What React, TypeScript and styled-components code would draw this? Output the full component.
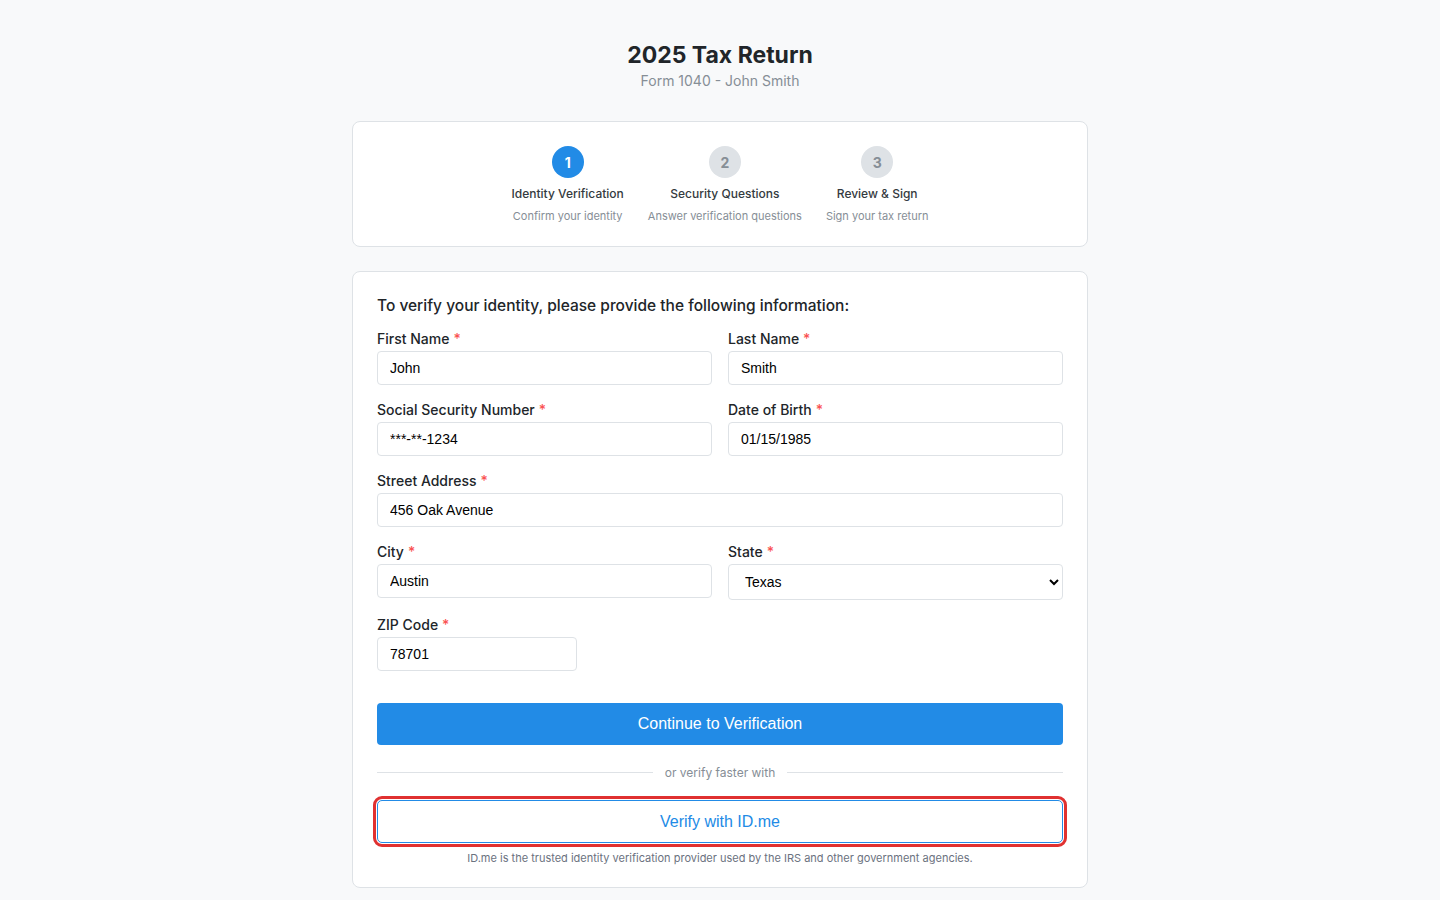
import React, { useState } from 'react';
import styled, { createGlobalStyle } from 'styled-components';

const GlobalStyle = createGlobalStyle`
  * { box-sizing: border-box; }
  body {
    margin: 0;
    background: #f8f9fa;
    font-family: Inter, "Noto Sans", sans-serif;
    color: #212529;
  }
`;

const SPage = styled.div`
  max-width: 736px;
  margin: 0 auto;
  padding: 40px 0 24px;
`;

const SHeader = styled.header`
  text-align: center;
  margin-bottom: 30px;
`;

const STitle = styled.h1`
  margin: 0;
  font-size: 23px;
  line-height: 30px;
  font-weight: 700;
  color: #212529;
`;

const SSubtitle = styled.p`
  margin: 1px 0 0;
  font-size: 14px;
  line-height: 20px;
  color: #868e96;
`;

const SCard = styled.section`
  background: #fff;
  border: 1px solid #dee2e6;
  border-radius: 8px;
  padding: 24px;
`;

const SStepsCard = styled(SCard)`
  padding: 24px 24px 23px;
  margin-bottom: 24px;
  display: flex;
  justify-content: center;
  gap: 24px;
`;

const SFormCard = styled(SCard)`
  padding: 25px 24px 22px;
`;

const SStep = styled.div`
  display: flex;
  flex-direction: column;
  align-items: center;
  text-align: center;
`;

const SStepCircle = styled.div<{ $active?: boolean }>`
  width: 32px;
  height: 32px;
  border-radius: 50%;
  display: flex;
  align-items: center;
  justify-content: center;
  font-size: 14px;
  font-weight: 700;
  background: ${(p) => (p.$active ? '#228be6' : '#dee2e6')};
  color: ${(p) => (p.$active ? '#fff' : '#868e96')};
  margin-bottom: 8px;
`;

const SStepTitle = styled.div`
  font-size: 12px;
  line-height: 16px;
  font-weight: 500;
  color: #343a40;
`;

const SStepDesc = styled.div`
  margin-top: 7px;
  font-size: 11px;
  line-height: 14px;
  color: #868e96;
`;

const SFormHeading = styled.h2`
  margin: 0 0 14px;
  font-size: 15.5px;
  line-height: 18px;
  font-weight: 500;
  color: #212529;
`;

const SForm = styled.form`
  display: flex;
  flex-direction: column;
  gap: 15px;
`;

const SRow = styled.div`
  display: grid;
  grid-template-columns: 1fr 1fr;
  gap: 16px;
`;

const SField = styled.div<{ $width?: string }>`
  display: flex;
  flex-direction: column;
  width: ${(p) => p.$width || 'auto'};
`;

const SLabel = styled.label`
  font-size: 14px;
  line-height: 20px;
  font-weight: 500;
  color: #212529;
  margin-bottom: 2px;
`;

const SRequired = styled.span`
  color: #fa5252;
  margin-left: 4px;
`;

const SInput = styled.input`
  height: 34px;
  width: 100%;
  padding: 0 12px;
  border: 1px solid #dee2e6;
  border-radius: 4px;
  font-family: "Liberation Sans", Arial, sans-serif;
  font-size: 14px;
  color: #000;
  background: #fff;
  outline: none;
`;

const SSelect = styled.select`
  height: 36px;
  width: 100%;
  padding: 0 12px;
  border: 1px solid #dee2e6;
  border-radius: 4px;
  font-family: "Liberation Sans", Arial, sans-serif;
  font-size: 14px;
  color: #000;
  background: #fff;
  outline: none;
`;

const SPrimaryButton = styled.button`
  margin-top: 17px;
  height: 42px;
  width: 100%;
  border: none;
  border-radius: 4px;
  background: #228be6;
  color: #fff;
  font-family: "Liberation Sans", Arial, sans-serif;
  font-size: 16px;
  cursor: pointer;
`;

const SDivider = styled.div`
  display: flex;
  align-items: center;
  gap: 12px;
  margin-top: 5px;
  font-size: 12px;
  line-height: 15px;
  color: #868e96;

  &::before,
  &::after {
    content: '';
    flex: 1;
    height: 1px;
    background: #dee2e6;
  }
`;

const SIdButton = styled.button`
  margin-top: 5px;
  height: 43px;
  width: 100%;
  border: 1px solid #228be6;
  border-radius: 5px;
  background: #fff;
  color: #228be6;
  font-family: "Liberation Sans", Arial, sans-serif;
  font-size: 16px;
  cursor: pointer;
  outline: 3px solid #e03131;
  outline-offset: 1px;
`;

const SFootnote = styled.p`
  margin: -7px 0 0;
  text-align: center;
  font-size: 11px;
  line-height: 14px;
  color: #6b7280;
`;

const Req = () => <SRequired>*</SRequired>;

const steps = [
  { n: 1, title: 'Identity Verification', desc: 'Confirm your identity' },
  { n: 2, title: 'Security Questions', desc: 'Answer verification questions' },
  { n: 3, title: 'Review & Sign', desc: 'Sign your tax return' },
];

const App = () => {
  const [form, setForm] = useState({
    firstName: 'John',
    lastName: 'Smith',
    ssn: '***-**-1234',
    dob: '01/15/1985',
    street: '456 Oak Avenue',
    city: 'Austin',
    state: 'TX',
    zip: '78701',
  });

  const set = (key: keyof typeof form) => (e: React.ChangeEvent<HTMLInputElement | HTMLSelectElement>) =>
    setForm({ ...form, [key]: e.target.value });

  return (
    <>
      <GlobalStyle />
      <SPage>
        <SHeader>
          <STitle>2025 Tax Return</STitle>
          <SSubtitle>Form 1040 - John Smith</SSubtitle>
        </SHeader>

        <SStepsCard>
          {steps.map((s) => (
            <SStep key={s.n}>
              <SStepCircle $active={s.n === 1}>{s.n}</SStepCircle>
              <SStepTitle>{s.title}</SStepTitle>
              <SStepDesc>{s.desc}</SStepDesc>
            </SStep>
          ))}
        </SStepsCard>

        <SFormCard>
          <SFormHeading>To verify your identity, please provide the following information:</SFormHeading>
          <SForm onSubmit={(e) => e.preventDefault()}>
            <SRow>
              <SField>
                <SLabel>First Name<Req /></SLabel>
                <SInput value={form.firstName} onChange={set('firstName')} />
              </SField>
              <SField>
                <SLabel>Last Name<Req /></SLabel>
                <SInput value={form.lastName} onChange={set('lastName')} />
              </SField>
            </SRow>
            <SRow>
              <SField>
                <SLabel>Social Security Number<Req /></SLabel>
                <SInput value={form.ssn} onChange={set('ssn')} />
              </SField>
              <SField>
                <SLabel>Date of Birth<Req /></SLabel>
                <SInput value={form.dob} onChange={set('dob')} />
              </SField>
            </SRow>
            <SField>
              <SLabel>Street Address<Req /></SLabel>
              <SInput value={form.street} onChange={set('street')} />
            </SField>
            <SRow>
              <SField>
                <SLabel>City<Req /></SLabel>
                <SInput value={form.city} onChange={set('city')} />
              </SField>
              <SField>
                <SLabel>State<Req /></SLabel>
                <SSelect value={form.state} onChange={set('state')}>
                  <option value="CA">California</option>
                  <option value="NY">New York</option>
                  <option value="TX">Texas</option>
                </SSelect>
              </SField>
            </SRow>
            <SField $width="200px">
              <SLabel>ZIP Code<Req /></SLabel>
              <SInput value={form.zip} onChange={set('zip')} />
            </SField>

            <SPrimaryButton type="submit">Continue to Verification</SPrimaryButton>
            <SDivider>or verify faster with</SDivider>
            <SIdButton type="button">Verify with ID.me</SIdButton>
            <SFootnote>ID.me is the trusted identity verification provider used by the IRS and other government agencies.</SFootnote>
          </SForm>
        </SFormCard>
      </SPage>
    </>
  );
};

export default App;
